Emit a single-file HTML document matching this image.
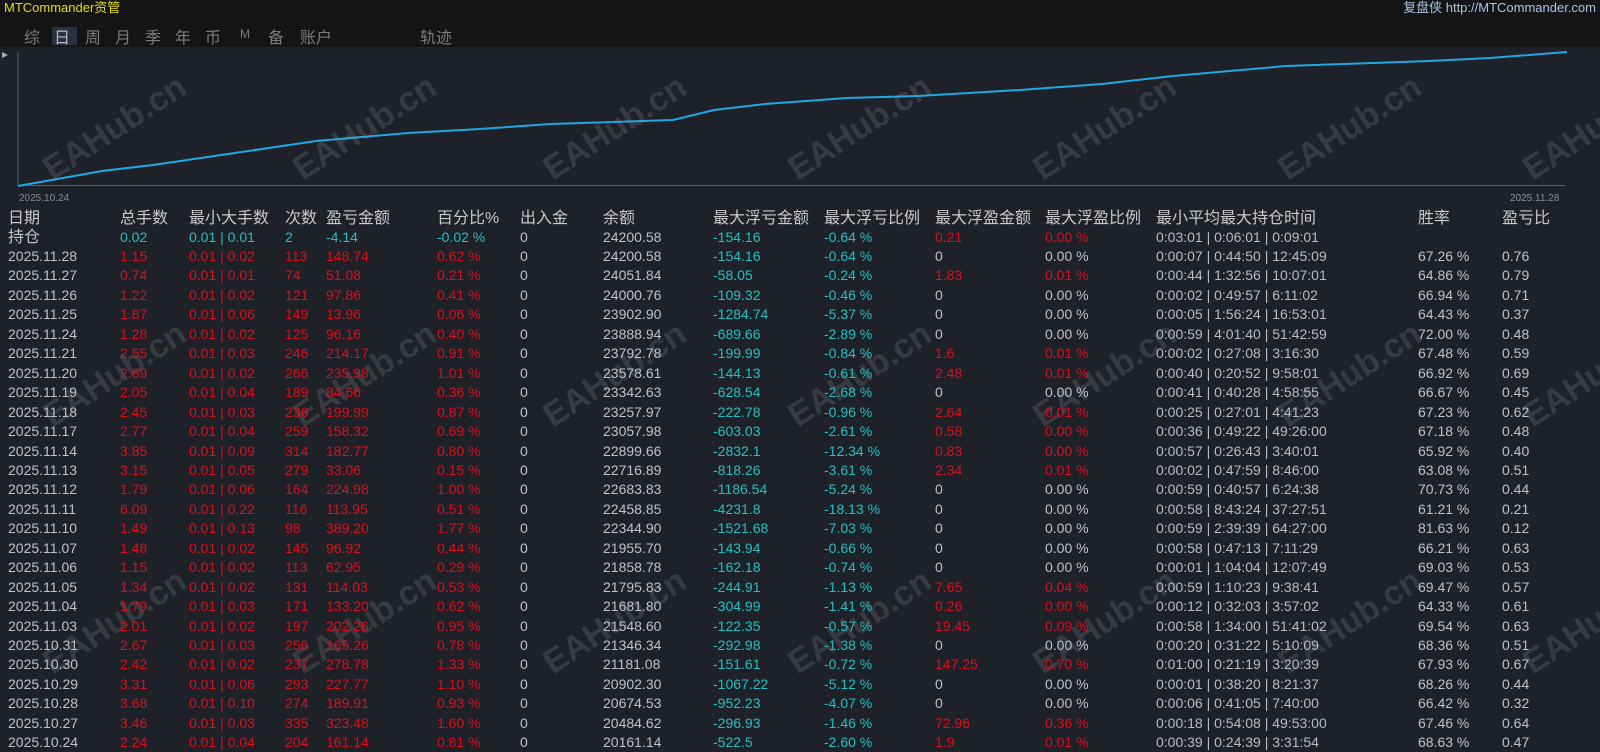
<!DOCTYPE html>
<html><head><meta charset="utf-8"><style>
*{margin:0;padding:0;box-sizing:border-box}
body{width:1600px;height:750px;overflow:hidden;background:#1e2128;font-family:"Liberation Sans","Noto Sans CJK SC",sans-serif;position:relative}
.top{position:absolute;left:0;top:0;width:1600px;height:47px;background:#141414}
.title{position:absolute;left:4px;top:-3px;color:#e6dc10;font-size:13px}
.rt{position:absolute;right:4px;top:-3px;color:#a9c6e6;font-size:13px}
.nav{position:absolute;top:24px;font-size:16px;color:#7c7c7c}
.hl{position:absolute;left:52px;top:27px;width:25px;height:18px;background:#2a3240}
.r{position:absolute;left:0;width:1600px;height:19px;font-size:14px;line-height:19px;color:#bfc2c8}
.r span{position:absolute;white-space:nowrap}
.r span:nth-child(1){left:8px}.r span:nth-child(2){left:120px}.r span:nth-child(3){left:189px}.r span:nth-child(4){left:285px}.r span:nth-child(5){left:326px}.r span:nth-child(6){left:437px}.r span:nth-child(7){left:520px}.r span:nth-child(8){left:603px}.r span:nth-child(9){left:713px}.r span:nth-child(10){left:824px}.r span:nth-child(11){left:935px}.r span:nth-child(12){left:1045px}.r span:nth-child(13){left:1156px;color:#b4bdca}.r span:nth-child(14){left:1418px}.r span:nth-child(15){left:1502px}
.d .n{color:#d8101c}
.r span:nth-child(2),.r span:nth-child(3),.r span:nth-child(4),.r span:nth-child(5),.r span:nth-child(6){color:#d8101c}
.r span:nth-child(9),.r span:nth-child(10){color:#22c0c4}
.r span.p{color:#d8101c}
.h{font-size:16px;color:#c8c8c8}
.h span{color:#c8c8c8 !important}
.c span{color:#22c0c4 !important}
.c span:nth-child(1),.c span:nth-child(7),.c span:nth-child(8){color:#bfc2c8 !important}
.c span.p{color:#d8101c !important}
.c span:nth-child(13){color:#b4bdca !important}
.wm{position:absolute;font-size:34px;font-weight:bold;color:rgba(150,150,160,0.22);transform:translate(-50%,-50%) rotate(-33deg);white-space:nowrap}
</style></head><body>
<div class="top"></div>
<div class="title">MTCommander资管</div>
<div class="rt">复盘侠 http://MTCommander.com</div>
<div class="hl"></div>
<div class="nav" style="left:24px">综</div><div class="nav" style="left:54px;color:#b8bcc4">日</div><div class="nav" style="left:85px">周</div><div class="nav" style="left:115px">月</div><div class="nav" style="left:145px">季</div><div class="nav" style="left:175px">年</div><div class="nav" style="left:205px">币</div><div class="nav" style="left:240px;font-size:12px;top:27px">M</div><div class="nav" style="left:268px">备</div><div class="nav" style="left:300px">账户</div><div class="nav" style="left:420px">轨迹</div>
<svg style="position:absolute;left:0;top:0" width="1600" height="210">
<polygon points="2,52 8,55 2,58" fill="#aaa"/>
<line x1="18" y1="52" x2="18" y2="186" stroke="#5a5f68" stroke-width="1"/>
<line x1="18" y1="185.5" x2="1565" y2="185.5" stroke="#5a5f68" stroke-width="1"/>
<polyline fill="none" stroke="#1ea8e4" stroke-width="2" points="18,186 102,171 153,165 235,153 316,141 408,133 480,129 551,124 673,120 714,110 765,104 847,98 918,96 1020,90 1102,84 1173,76 1286,66 1429,61 1490,58 1567,52"/>
<text x="19" y="201" font-size="10" fill="#8a8e96" font-family="Liberation Sans">2025.10.24</text>
<text x="1510" y="201" font-size="10" fill="#8a8e96" font-family="Liberation Sans">2025.11.28</text>
</svg>
<div class="wm" style="left:115px;top:128px">EAHub.cn</div><div class="wm" style="left:365px;top:128px">EAHub.cn</div><div class="wm" style="left:615px;top:128px">EAHub.cn</div><div class="wm" style="left:860px;top:128px">EAHub.cn</div><div class="wm" style="left:1105px;top:128px">EAHub.cn</div><div class="wm" style="left:1350px;top:128px">EAHub.cn</div><div class="wm" style="left:1595px;top:128px">EAHub.cn</div>
<div class="wm" style="left:115px;top:375px">EAHub.cn</div><div class="wm" style="left:365px;top:375px">EAHub.cn</div><div class="wm" style="left:615px;top:375px">EAHub.cn</div><div class="wm" style="left:860px;top:375px">EAHub.cn</div><div class="wm" style="left:1105px;top:375px">EAHub.cn</div><div class="wm" style="left:1350px;top:375px">EAHub.cn</div><div class="wm" style="left:1595px;top:375px">EAHub.cn</div>
<div class="wm" style="left:115px;top:622px">EAHub.cn</div><div class="wm" style="left:365px;top:622px">EAHub.cn</div><div class="wm" style="left:615px;top:622px">EAHub.cn</div><div class="wm" style="left:860px;top:622px">EAHub.cn</div><div class="wm" style="left:1105px;top:622px">EAHub.cn</div><div class="wm" style="left:1350px;top:622px">EAHub.cn</div><div class="wm" style="left:1595px;top:622px">EAHub.cn</div>

<div class="r h" style="top:209px"><span>日期</span><span>总手数</span><span>最小大手数</span><span>次数</span><span>盈亏金额</span><span>百分比%</span><span>出入金</span><span>余额</span><span>最大浮亏金额</span><span>最大浮亏比例</span><span>最大浮盈金额</span><span>最大浮盈比例</span><span>最小平均最大持仓时间</span><span>胜率</span><span>盈亏比</span></div>
<div class="r c" style="top:228px"><span style="font-size:16px">持仓</span><span>0.02</span><span>0.01 | 0.01</span><span>2</span><span>-4.14</span><span>-0.02 %</span><span>0</span><span>24200.58</span><span>-154.16</span><span>-0.64 %</span><span class="p">0.21</span><span class="p">0.00 %</span><span>0:03:01 | 0:06:01 | 0:09:01</span><span></span><span></span></div>
<div class="r" style="top:247px"><span>2025.11.28</span><span>1.15</span><span>0.01 | 0.02</span><span>113</span><span>148.74</span><span>0.62 %</span><span>0</span><span>24200.58</span><span>-154.16</span><span>-0.64 %</span><span>0</span><span>0.00 %</span><span>0:00:07 | 0:44:50 | 12:45:09</span><span>67.26 %</span><span>0.76</span></div>
<div class="r" style="top:266px"><span>2025.11.27</span><span>0.74</span><span>0.01 | 0.01</span><span>74</span><span>51.08</span><span>0.21 %</span><span>0</span><span>24051.84</span><span>-58.05</span><span>-0.24 %</span><span class="p">1.83</span><span class="p">0.01 %</span><span>0:00:44 | 1:32:56 | 10:07:01</span><span>64.86 %</span><span>0.79</span></div>
<div class="r" style="top:286px"><span>2025.11.26</span><span>1.22</span><span>0.01 | 0.02</span><span>121</span><span>97.86</span><span>0.41 %</span><span>0</span><span>24000.76</span><span>-109.32</span><span>-0.46 %</span><span>0</span><span>0.00 %</span><span>0:00:02 | 0:49:57 | 6:11:02</span><span>66.94 %</span><span>0.71</span></div>
<div class="r" style="top:305px"><span>2025.11.25</span><span>1.87</span><span>0.01 | 0.06</span><span>149</span><span>13.96</span><span>0.06 %</span><span>0</span><span>23902.90</span><span>-1284.74</span><span>-5.37 %</span><span>0</span><span>0.00 %</span><span>0:00:05 | 1:56:24 | 16:53:01</span><span>64.43 %</span><span>0.37</span></div>
<div class="r" style="top:325px"><span>2025.11.24</span><span>1.28</span><span>0.01 | 0.02</span><span>125</span><span>96.16</span><span>0.40 %</span><span>0</span><span>23888.94</span><span>-689.66</span><span>-2.89 %</span><span>0</span><span>0.00 %</span><span>0:00:59 | 4:01:40 | 51:42:59</span><span>72.00 %</span><span>0.48</span></div>
<div class="r" style="top:344px"><span>2025.11.21</span><span>2.55</span><span>0.01 | 0.03</span><span>246</span><span>214.17</span><span>0.91 %</span><span>0</span><span>23792.78</span><span>-199.99</span><span>-0.84 %</span><span class="p">1.6</span><span class="p">0.01 %</span><span>0:00:02 | 0:27:08 | 3:16:30</span><span>67.48 %</span><span>0.59</span></div>
<div class="r" style="top:364px"><span>2025.11.20</span><span>2.69</span><span>0.01 | 0.02</span><span>266</span><span>235.98</span><span>1.01 %</span><span>0</span><span>23578.61</span><span>-144.13</span><span>-0.61 %</span><span class="p">2.48</span><span class="p">0.01 %</span><span>0:00:40 | 0:20:52 | 9:58:01</span><span>66.92 %</span><span>0.69</span></div>
<div class="r" style="top:383px"><span>2025.11.19</span><span>2.05</span><span>0.01 | 0.04</span><span>189</span><span>84.66</span><span>0.36 %</span><span>0</span><span>23342.63</span><span>-628.54</span><span>-2.68 %</span><span>0</span><span>0.00 %</span><span>0:00:41 | 0:40:28 | 4:58:55</span><span>66.67 %</span><span>0.45</span></div>
<div class="r" style="top:403px"><span>2025.11.18</span><span>2.45</span><span>0.01 | 0.03</span><span>236</span><span>199.99</span><span>0.87 %</span><span>0</span><span>23257.97</span><span>-222.78</span><span>-0.96 %</span><span class="p">2.64</span><span class="p">0.01 %</span><span>0:00:25 | 0:27:01 | 4:41:23</span><span>67.23 %</span><span>0.62</span></div>
<div class="r" style="top:422px"><span>2025.11.17</span><span>2.77</span><span>0.01 | 0.04</span><span>259</span><span>158.32</span><span>0.69 %</span><span>0</span><span>23057.98</span><span>-603.03</span><span>-2.61 %</span><span class="p">0.58</span><span class="p">0.00 %</span><span>0:00:36 | 0:49:22 | 49:26:00</span><span>67.18 %</span><span>0.48</span></div>
<div class="r" style="top:442px"><span>2025.11.14</span><span>3.85</span><span>0.01 | 0.09</span><span>314</span><span>182.77</span><span>0.80 %</span><span>0</span><span>22899.66</span><span>-2832.1</span><span>-12.34 %</span><span class="p">0.83</span><span class="p">0.00 %</span><span>0:00:57 | 0:26:43 | 3:40:01</span><span>65.92 %</span><span>0.40</span></div>
<div class="r" style="top:461px"><span>2025.11.13</span><span>3.15</span><span>0.01 | 0.05</span><span>279</span><span>33.06</span><span>0.15 %</span><span>0</span><span>22716.89</span><span>-818.26</span><span>-3.61 %</span><span class="p">2.34</span><span class="p">0.01 %</span><span>0:00:02 | 0:47:59 | 8:46:00</span><span>63.08 %</span><span>0.51</span></div>
<div class="r" style="top:480px"><span>2025.11.12</span><span>1.79</span><span>0.01 | 0.06</span><span>164</span><span>224.98</span><span>1.00 %</span><span>0</span><span>22683.83</span><span>-1186.54</span><span>-5.24 %</span><span>0</span><span>0.00 %</span><span>0:00:59 | 0:40:57 | 6:24:38</span><span>70.73 %</span><span>0.44</span></div>
<div class="r" style="top:500px"><span>2025.11.11</span><span>6.09</span><span>0.01 | 0.22</span><span>116</span><span>113.95</span><span>0.51 %</span><span>0</span><span>22458.85</span><span>-4231.8</span><span>-18.13 %</span><span>0</span><span>0.00 %</span><span>0:00:58 | 8:43:24 | 37:27:51</span><span>61.21 %</span><span>0.21</span></div>
<div class="r" style="top:519px"><span>2025.11.10</span><span>1.49</span><span>0.01 | 0.13</span><span>98</span><span>389.20</span><span>1.77 %</span><span>0</span><span>22344.90</span><span>-1521.68</span><span>-7.03 %</span><span>0</span><span>0.00 %</span><span>0:00:59 | 2:39:39 | 64:27:00</span><span>81.63 %</span><span>0.12</span></div>
<div class="r" style="top:539px"><span>2025.11.07</span><span>1.48</span><span>0.01 | 0.02</span><span>145</span><span>96.92</span><span>0.44 %</span><span>0</span><span>21955.70</span><span>-143.94</span><span>-0.66 %</span><span>0</span><span>0.00 %</span><span>0:00:58 | 0:47:13 | 7:11:29</span><span>66.21 %</span><span>0.63</span></div>
<div class="r" style="top:558px"><span>2025.11.06</span><span>1.15</span><span>0.01 | 0.02</span><span>113</span><span>62.95</span><span>0.29 %</span><span>0</span><span>21858.78</span><span>-162.18</span><span>-0.74 %</span><span>0</span><span>0.00 %</span><span>0:00:01 | 1:04:04 | 12:07:49</span><span>69.03 %</span><span>0.53</span></div>
<div class="r" style="top:578px"><span>2025.11.05</span><span>1.34</span><span>0.01 | 0.02</span><span>131</span><span>114.03</span><span>0.53 %</span><span>0</span><span>21795.83</span><span>-244.91</span><span>-1.13 %</span><span class="p">7.65</span><span class="p">0.04 %</span><span>0:00:59 | 1:10:23 | 9:38:41</span><span>69.47 %</span><span>0.57</span></div>
<div class="r" style="top:597px"><span>2025.11.04</span><span>1.79</span><span>0.01 | 0.03</span><span>171</span><span>133.20</span><span>0.62 %</span><span>0</span><span>21681.80</span><span>-304.99</span><span>-1.41 %</span><span class="p">0.26</span><span class="p">0.00 %</span><span>0:00:12 | 0:32:03 | 3:57:02</span><span>64.33 %</span><span>0.61</span></div>
<div class="r" style="top:617px"><span>2025.11.03</span><span>2.01</span><span>0.01 | 0.02</span><span>197</span><span>202.26</span><span>0.95 %</span><span>0</span><span>21548.60</span><span>-122.35</span><span>-0.57 %</span><span class="p">19.45</span><span class="p">0.09 %</span><span>0:00:58 | 1:34:00 | 51:41:02</span><span>69.54 %</span><span>0.63</span></div>
<div class="r" style="top:636px"><span>2025.10.31</span><span>2.67</span><span>0.01 | 0.03</span><span>256</span><span>165.26</span><span>0.78 %</span><span>0</span><span>21346.34</span><span>-292.98</span><span>-1.38 %</span><span>0</span><span>0.00 %</span><span>0:00:20 | 0:31:22 | 5:10:09</span><span>68.36 %</span><span>0.51</span></div>
<div class="r" style="top:655px"><span>2025.10.30</span><span>2.42</span><span>0.01 | 0.02</span><span>237</span><span>278.78</span><span>1.33 %</span><span>0</span><span>21181.08</span><span>-151.61</span><span>-0.72 %</span><span class="p">147.25</span><span class="p">0.70 %</span><span>0:01:00 | 0:21:19 | 3:20:39</span><span>67.93 %</span><span>0.67</span></div>
<div class="r" style="top:675px"><span>2025.10.29</span><span>3.31</span><span>0.01 | 0.06</span><span>293</span><span>227.77</span><span>1.10 %</span><span>0</span><span>20902.30</span><span>-1067.22</span><span>-5.12 %</span><span>0</span><span>0.00 %</span><span>0:00:01 | 0:38:20 | 8:21:37</span><span>68.26 %</span><span>0.44</span></div>
<div class="r" style="top:694px"><span>2025.10.28</span><span>3.68</span><span>0.01 | 0.10</span><span>274</span><span>189.91</span><span>0.93 %</span><span>0</span><span>20674.53</span><span>-952.23</span><span>-4.07 %</span><span>0</span><span>0.00 %</span><span>0:00:06 | 0:41:05 | 7:40:00</span><span>66.42 %</span><span>0.32</span></div>
<div class="r" style="top:714px"><span>2025.10.27</span><span>3.46</span><span>0.01 | 0.03</span><span>335</span><span>323.48</span><span>1.60 %</span><span>0</span><span>20484.62</span><span>-296.93</span><span>-1.46 %</span><span class="p">72.96</span><span class="p">0.36 %</span><span>0:00:18 | 0:54:08 | 49:53:00</span><span>67.46 %</span><span>0.64</span></div>
<div class="r" style="top:733px"><span>2025.10.24</span><span>2.24</span><span>0.01 | 0.04</span><span>204</span><span>161.14</span><span>0.81 %</span><span>0</span><span>20161.14</span><span>-522.5</span><span>-2.60 %</span><span class="p">1.9</span><span class="p">0.01 %</span><span>0:00:39 | 0:24:39 | 3:31:54</span><span>68.63 %</span><span>0.47</span></div>
</body></html>
